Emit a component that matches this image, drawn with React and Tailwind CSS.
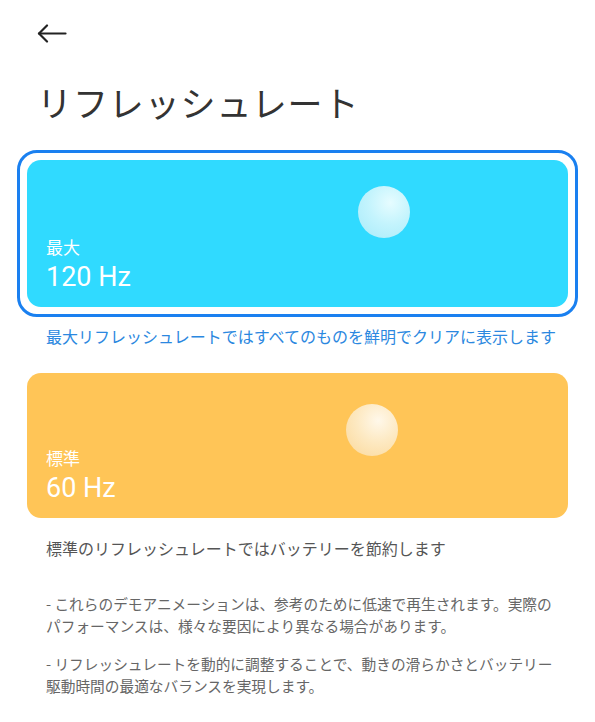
import React from 'react';

const jp = "font-['Noto_Sans_CJK_JP','Noto_Sans',sans-serif]";
const num = "font-['Roboto','Noto_Sans_CJK_JP',sans-serif]";

const Ball = ({ tone, className }) => (
  <div
    className={`absolute w-[52px] h-[52px] rounded-full ${className} ${
      tone === 'cyan'
        ? 'bg-[radial-gradient(circle_at_62%_32%,#e6fcff_0%,#c4f4fd_45%,#a6ebfa_100%)]'
        : 'bg-[radial-gradient(circle_at_62%_32%,#fff8ea_0%,#fde9c2_45%,#fbd898_100%)]'
    }`}
  />
);

const RateCard = ({ bg, label, value, tone, ballPos, height }) => (
  <div className={`relative ${height} rounded-[14px] ${bg} flex flex-col justify-end pl-[19px] pb-[15px] text-white`}>
    <Ball tone={tone} className={ballPos} />
    <p className={`${jp} text-[17px] leading-[22px]`}>{label}</p>
    <p className={`${num} mt-[4px] text-[27px] leading-[30px]`}>{value}</p>
  </div>
);

export default function App() {
  return (
    <div className={`w-[595px] h-[722px] bg-white overflow-hidden ${jp}`}>
      <div className="pt-[24px] pl-[37px]">
        <svg width="30" height="20" viewBox="0 0 30 20" fill="none" stroke="#222" strokeWidth="2.2" strokeLinecap="round" strokeLinejoin="round">
          <path d="M2 9.5H28.5" />
          <path d="M10 1.5L2 9.5L10 17.5" />
        </svg>
      </div>

      <h1 className="mt-[34px] pl-[37px] text-[35px] leading-[48px] text-[#333] tracking-[0.9px] font-normal">
        リフレッシュレート
      </h1>

      <div className="mt-[24px] mx-[17px] rounded-[20px] border-[3px] border-[#1a80f0] p-[7px]">
        <RateCard
          bg="bg-[#30daff]"
          label="最大"
          value="120 Hz"
          tone="cyan"
          ballPos="left-[331px] top-[26px]"
          height="h-[147px]"
        />
      </div>

      <p className="mt-[7px] pl-[46px] text-[16px] leading-[24px] text-[#2b88e0]">
        最大リフレッシュレートではすべてのものを鮮明でクリアに表示します
      </p>

      <div className="mt-[25px] mx-[27px]">
        <RateCard
          bg="bg-[#ffc557]"
          label="標準"
          value="60 Hz"
          tone="orange"
          ballPos="left-[319px] top-[31px]"
          height="h-[145px]"
        />
      </div>

      <p className="mt-[18px] pl-[46px] text-[16px] leading-[24px] text-[#555]">
        標準のリフレッシュレートではバッテリーを節約します
      </p>

      <div className="pl-[46px] text-[14.7px] leading-[22px] text-[#666] whitespace-nowrap">
        <p className="mt-[33px]">
          - これらのデモアニメーションは、参考のために低速で再生されます。実際の
          <br />
          パフォーマンスは、様々な要因により異なる場合があります。
        </p>
        <p className="mt-[16px]">
          - リフレッシュレートを動的に調整することで、動きの滑らかさとバッテリー
          <br />
          駆動時間の最適なバランスを実現します。
        </p>
      </div>
    </div>
  );
}
